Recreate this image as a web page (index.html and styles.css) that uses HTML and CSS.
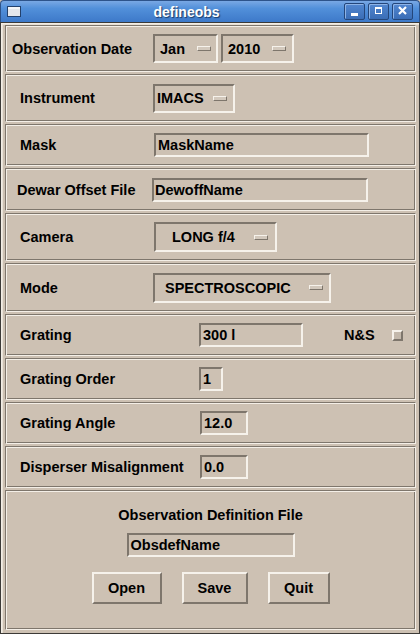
FILE: index.html
```html
<!DOCTYPE html>
<html>
<head>
<meta charset="utf-8">
<link rel="stylesheet" href="styles.css">
</head>
<body>
<div class="win">
  <div class="titlebar">
    <div class="ticon">
      <svg width="14" height="11" viewBox="0 0 14 11"><rect x="0.5" y="0.5" width="13" height="10" fill="#e3e6eb" stroke="#23416c"/><rect x="1" y="1" width="12" height="2" fill="#f4f5f7"/></svg>
    </div>
    <div class="ttext">defineobs</div>
    <div class="tbtns">
      <div class="tbtn"><svg width="21" height="17" viewBox="0 0 21 17"><rect x="7" y="10" width="7" height="3" fill="#fff"/></svg></div>
      <div class="tbtn"><svg width="21" height="17" viewBox="0 0 21 17"><rect x="7.5" y="4.5" width="6" height="6" fill="none" stroke="#fff"/><rect x="7" y="4" width="7" height="2" fill="#fff"/></svg></div>
      <div class="tbtn"><svg width="21" height="17" viewBox="0 0 21 17"><path d="M7 4 L14 11 M14 4 L7 11" stroke="#fff" stroke-width="2.2"/></svg></div>
    </div>
  </div>
  <div class="content">
    <div class="sec row h47 p6">
      <span class="lbl w141">Observation Date</span>
      <div class="mb mb-jan"><span class="mbt">Jan</span><span class="ind"></span></div>
      <div class="mb mb-yr"><span class="mbt">2010</span><span class="ind"></span></div>
    </div>
    <div class="sec row h48 p14">
      <span class="lbl w133">Instrument</span>
      <div class="mb mb-inst"><span class="mbt">IMACS</span><span class="ind"></span></div>
    </div>
    <div class="sec row h42 p14">
      <span class="lbl w134">Mask</span>
      <div class="entry e-mask">MaskName</div>
    </div>
    <div class="sec row h43 p11">
      <span class="lbl w135">Dewar Offset File</span>
      <div class="entry e-dewar">DewoffName</div>
    </div>
    <div class="sec row h48 p14">
      <span class="lbl w134">Camera</span>
      <div class="mb mb-cam"><span class="mbt">LONG f/4</span><span class="ind"></span></div>
    </div>
    <div class="sec row h49 p14">
      <span class="lbl w133">Mode</span>
      <div class="mb mb-mode"><span class="mbt">SPECTROSCOPIC</span><span class="ind"></span></div>
    </div>
    <div class="sec row h42 p14">
      <span class="lbl w179">Grating</span>
      <div class="entry e-grat">300 l</div>
      <span class="ns">N&amp;S</span>
      <span class="chk"></span>
    </div>
    <div class="sec row h42 p14">
      <span class="lbl w179">Grating Order</span>
      <div class="entry e-order">1</div>
    </div>
    <div class="sec row h42 p14">
      <span class="lbl w180">Grating Angle</span>
      <div class="entry e-num">12.0</div>
    </div>
    <div class="sec row h42 p14">
      <span class="lbl w180">Disperser Misalignment</span>
      <div class="entry e-num">0.0</div>
    </div>
    <div class="sec bottom">
      <div class="blbl">Observation Definition File</div>
      <div class="entry e-obs">ObsdefName</div>
      <div class="btns">
        <div class="btn b-open">Open</div>
        <div class="btn b-save">Save</div>
        <div class="btn b-quit">Quit</div>
      </div>
    </div>
  </div>
</div>
</body>
</html>
```
FILE: styles.css
```css
html, body {
  margin: 0;
  padding: 0;
  background: #cdc1b3;
}
.win {
  width: 420px;
  height: 634px;
  display: flex;
  flex-direction: column;
  font-family: "Liberation Sans", Arial, sans-serif;
  font-weight: bold;
  font-size: 14.5px;
  color: #000;
}
.titlebar {
  height: 22px;
  box-sizing: border-box;
  display: flex;
  align-items: center;
  background: linear-gradient(#79a8e4 0%, #5290da 35%, #3d79c9 100%);
  border: 1px solid #2d538a;
  border-bottom: none;
  border-radius: 4px 4px 0 0;
}
.ticon {
  margin-left: 6px;
  display: flex;
}
.ttext {
  flex: 1;
  text-align: center;
  padding-left: 8px;
  color: #fff;
  font-size: 14px;
  font-weight: bold;
  text-shadow: 1px 1px 1px #1b3a66;
}
.tbtns {
  display: flex;
  gap: 3px;
  margin-right: 6px;
}
.tbtn {
  width: 21px;
  height: 17px;
  box-sizing: border-box;
  border: 1px solid #24467a;
  border-radius: 2px;
  background: linear-gradient(#5287d0, #3a6db6);
  box-shadow: inset 1px 1px 0 #8db3e6;
  display: flex;
}
.tbtn svg {
  margin: -1px;
}
.content {
  flex: 1;
  box-sizing: border-box;
  border: 1px solid #3c3a37;
  padding: 2px 3px 3px 4px;
  display: flex;
  flex-direction: column;
  gap: 2px;
  background: #cdc1b3;
  box-shadow: inset 1px 1px 0 #f3eee6, inset 2px 2px 0 #e8e1d6;
}
.sec {
  box-sizing: border-box;
  border: 1px solid;
  border-color: #7e766c #f4efe7 #f4efe7 #7e766c;
  box-shadow: inset 1px 1px 0 #f4efe7, inset -1px -1px 0 #7e766c;
}
.row {
  display: flex;
  align-items: center;
}
.h42 { height: 42px; }
.h43 { height: 43px; }
.h47 { height: 47px; }
.h48 { height: 48px; }
.h49 { height: 49px; }
.p6 { padding-left: 6px; }
.p11 { padding-left: 11px; }
.p14 { padding-left: 14px; }
.lbl {
  white-space: nowrap;
  flex: none;
}
.w133 { width: 133px; }
.w134 { width: 134px; }
.w135 { width: 135px; }
.w141 { width: 141px; }
.w179 { width: 179px; }
.w180 { width: 180px; }

.mb {
  box-sizing: border-box;
  height: 29px;
  border: 2px solid;
  border-color: #7e766c #f6f2eb #f6f2eb #7e766c;
  display: flex;
  align-items: center;
  flex: none;
}
.ind {
  width: 14px;
  height: 5px;
  box-sizing: border-box;
  border: 1px solid;
  border-color: #f6f2eb #7e766c #7e766c #f6f2eb;
  background: #d3c9bd;
  margin-left: auto;
  margin-right: 5px;
}
.mb-jan { width: 65px; padding-left: 5px; margin-right: 3px; }
.mb-yr { width: 73px; padding-left: 5px; }
.mb-yr .ind { margin-right: 6px; }
.mb-inst { width: 82px; padding-left: 2px; }
.mb-inst .ind { margin-right: 6px; }
.mb-cam { width: 123px; height: 30px; padding-left: 16px; }
.mb-cam .ind { margin-right: 7px; }
.mb-mode { width: 178px; height: 30px; padding-left: 10px; }
.mb-mode .ind { margin-right: 6px; }

.entry {
  box-sizing: border-box;
  height: 24px;
  line-height: 20px;
  border: 2px solid;
  border-color: #7e766c #f6f2eb #f6f2eb #7e766c;
  padding-left: 2px;
  white-space: nowrap;
  overflow: hidden;
  flex: none;
}
.e-mask { width: 215px; }
.e-dewar { width: 216px; padding-left: 1px; }
.e-grat { width: 104px; }
.e-order { width: 24px; }
.e-num { width: 48px; }
.e-obs { width: 168px; }

.ns {
  margin-left: 41px;
  width: 31px;
}
.chk {
  margin-left: 17px;
  width: 11px;
  height: 11px;
  box-sizing: border-box;
  border: 2px solid;
  border-color: #f6f2eb #7e766c #7e766c #f6f2eb;
  background: #c3b8ab;
}

.bottom {
  flex: 1;
  display: flex;
  flex-direction: column;
  align-items: center;
  padding-top: 15px;
}
.blbl {
  line-height: 18px;
  margin-bottom: 9px;
}
.btns {
  display: flex;
  gap: 20px;
  margin-top: 15px;
}
.btn {
  box-sizing: border-box;
  height: 32px;
  border: 2px solid;
  border-color: #f6f2eb #7e766c #7e766c #f6f2eb;
  display: flex;
  align-items: center;
  justify-content: center;
}
.b-open { width: 70px; }
.b-save { width: 66px; }
.b-quit { width: 62px; }
```
